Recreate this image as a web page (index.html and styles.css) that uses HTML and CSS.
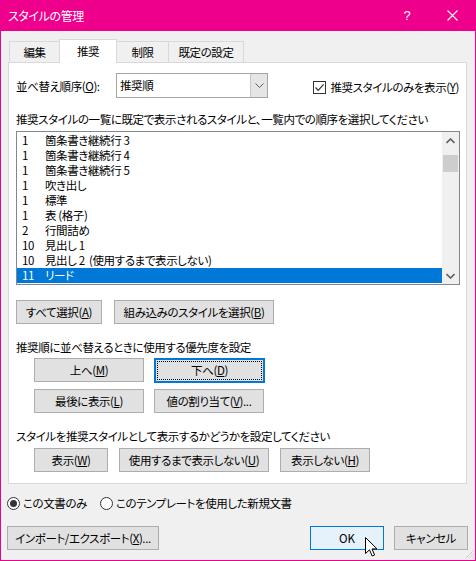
FILE: index.html
```html
<!DOCTYPE html>
<html lang="ja">
<head>
<meta charset="utf-8">
<title>スタイルの管理</title>
<link rel="stylesheet" href="styles.css">
</head>
<body>
<div class="window">
  <div class="titlebar">
    <span class="title">スタイルの管理</span>
    <span class="tb-help">?</span>
    <span class="tb-close"><svg width="11" height="11" viewBox="0 0 11 11"><path d="M0.5 0.5L10.5 10.5M10.5 0.5L0.5 10.5" stroke="#fff" stroke-width="1.1" fill="none"/></svg></span>
  </div>
  <div class="tabs">
    <div class="tab t1">編集</div>
    <div class="tab t2 sel">推奨</div>
    <div class="tab t3">制限</div>
    <div class="tab t4">既定の設定</div>
  </div>
  <div class="panel">
    <div class="sortrow">
      <span class="lbl sortlbl">並べ替え順序(<u>O</u>):</span>
      <div class="combo">
        <span class="combo-text">推奨順</span>
        <span class="combo-btn"><svg width="9" height="5" viewBox="0 0 9 5"><path d="M0.5 0.5L4.5 4.5L8.5 0.5" stroke="#606060" fill="none"/></svg></span>
      </div>
      <div class="check">
        <span class="box"><svg width="11" height="11" viewBox="0 0 11 11"><path d="M1.5 5.5L4.2 8.3L9.6 2.4" stroke="#333" stroke-width="1.2" fill="none"/></svg></span>
        <span class="lbl">推奨スタイルのみを表示(<u>Y</u>)</span>
      </div>
    </div>
    <div class="lbl desc">推奨スタイルの一覧に既定で表示されるスタイルと、一覧内での順序を選択してください</div>
    <div class="listbox">
      <div class="items">
        <div class="item"><span class="num">1</span><span>箇条書き継続行 3</span></div>
        <div class="item"><span class="num">1</span><span>箇条書き継続行 4</span></div>
        <div class="item"><span class="num">1</span><span>箇条書き継続行 5</span></div>
        <div class="item"><span class="num">1</span><span>吹き出し</span></div>
        <div class="item"><span class="num">1</span><span>標準</span></div>
        <div class="item"><span class="num">1</span><span>表 (格子)</span></div>
        <div class="item"><span class="num">2</span><span>行間詰め</span></div>
        <div class="item"><span class="num">10</span><span>見出し 1</span></div>
        <div class="item"><span class="num">10</span><span>見出し 2&nbsp;&nbsp;(使用するまで表示しない)</span></div>
        <div class="item selected"><span class="num">11</span><span>リード</span></div>
      </div>
      <div class="scrollbar">
        <span class="sb-arrow"><svg width="9" height="6" viewBox="0 0 9 6"><path d="M0.5 5L4.5 1L8.5 5" stroke="#606060" stroke-width="1.6" fill="none"/></svg></span>
        <span class="sb-thumb"></span>
        <span class="sb-fill"></span>
        <span class="sb-arrow"><svg width="9" height="6" viewBox="0 0 9 6"><path d="M0.5 1L4.5 5L8.5 1" stroke="#606060" stroke-width="1.6" fill="none"/></svg></span>
      </div>
    </div>
    <div class="btnrow r1">
      <span class="btn w86">すべて選択(<u>A</u>)</span>
      <span class="btn w160">組み込みのスタイルを選択(<u>B</u>)</span>
    </div>
    <div class="lbl sect s1">推奨順に並べ替えるときに使用する優先度を設定</div>
    <div class="btnrow r2 indent">
      <span class="btn w110">上へ(<u>M</u>)</span>
      <span class="btn w110 focus"><span class="focus-in">下へ(<u>D</u>)</span></span>
    </div>
    <div class="btnrow r3 indent">
      <span class="btn w110">最後に表示(<u>L</u>)</span>
      <span class="btn w110">値の割り当て(<u>V</u>)...</span>
    </div>
    <div class="lbl sect s2">スタイルを推奨スタイルとして表示するかどうかを設定してください</div>
    <div class="btnrow r4 indent g11">
      <span class="btn w74">表示(<u>W</u>)</span>
      <span class="btn w150">使用するまで表示しない(<u>U</u>)</span>
      <span class="btn w90">表示しない(<u>H</u>)</span>
    </div>
  </div>
  <div class="radios">
    <span class="radio on"><span class="dot"></span></span><span class="lbl">この文書のみ</span>
    <span class="radio r2nd"></span><span class="lbl">このテンプレートを使用した新規文書</span>
  </div>
  <div class="footer">
    <span class="btn w152">インポート/エクスポート(<u>X</u>)...</span>
    <span class="btn w74 ok">OK</span>
    <span class="btn w74 cancel">キャンセル</span>
  </div>
  <svg class="grip" width="11" height="11" viewBox="0 0 11 11"><path d="M9.5 1.5L1.5 9.5M9.5 5L5 9.5M9.5 8.5L8.5 9.5" stroke="#a8a8a8" stroke-width="1" stroke-dasharray="1 1" fill="none"/></svg>
  <svg class="cursor" width="13" height="20" viewBox="0 0 13 20"><path d="M0.5 0.5L0.5 16.5L4.5 12.8L7.2 19L9.6 18L7 11.9L12 11.9Z" fill="#fff" stroke="#000" stroke-width="1" stroke-linejoin="round"/></svg>
</div>
</body>
</html>
```

FILE: styles.css
```css
* { box-sizing: border-box; }
html, body { margin: 0; padding: 0; }
body {
  font-family: "Noto Sans CJK JP", "Noto Sans", sans-serif;
  font-size: 11.5px;
  letter-spacing: -0.4px;
  font-feature-settings: "palt";
  color: #000;
  background: #fff;
}
u { text-decoration: underline; text-underline-offset: 1px; }

.window {
  position: relative;
  width: 476px;
  height: 561px;
  background: #f0f0f0;
  border: 1px solid #ef008c;
  border-top: 0;
}
.titlebar {
  height: 31px;
  margin: 0 -1px;
  background: #ef008c;
  color: #fff;
  display: flex;
  align-items: center;
  padding-left: 8px;
}
.title { font-size: 12px; line-height: 15px; flex: 1; }
.tb-help { width: 12px; text-align: center; font-family: "Liberation Sans", sans-serif; font-size: 13px; margin-right: 34px; }
.tb-close { width: 11px; height: 11px; display: flex; margin-right: 18px; }

.tabs {
  display: flex;
  align-items: flex-end;
  height: 23px;
  margin-top: 8px;
  padding-left: 8px;
}
.tab {
  height: 21px;
  border: 1px solid #d9d9d9;
  border-bottom: 0;
  background: #f0f0f0;
  display: flex;
  align-items: center;
  justify-content: center;
  line-height: 15px;
  padding-top: 1px;
}
.tab + .tab { margin-left: -1px; }
.t1 { width: 51px; }
.t2 { width: 58px; }
.t3 { width: 53px; }
.t4 { width: 76px; }
.tab.sel {
  position: relative;
  z-index: 1;
  height: 24px;
  margin-bottom: -1px;
  background: #fff;
  padding-top: 0;
}

.panel {
  margin-left: 7px;
  width: 459px;
  height: 422px;
  background: #fff;
  border: 1px solid #d9d9d9;
  padding: 10px 7px 0 7px;
}
.lbl { line-height: 15px; white-space: nowrap; }

.sortrow {
  display: flex;
  align-items: center;
  height: 25px;
}
.sortlbl { width: 100px; padding-top: 2px; }
.combo {
  width: 152px;
  height: 25px;
  border: 1px solid #a5a5a5;
  display: flex;
  align-items: center;
}
.combo-text { flex: 1; padding-left: 3px; line-height: 15px; }
.combo-btn {
  width: 17px;
  height: 23px;
  background: #e5e5e5;
  border-left: 1px solid #c8c8c8;
  display: flex;
  align-items: center;
  justify-content: center;
}
.check {
  margin-left: auto;
  display: flex;
  align-items: center;
  padding-top: 4px;
}
.box {
  width: 13px;
  height: 13px;
  border: 1px solid #333;
  margin-right: 4px;
  display: flex;
  align-items: center;
  justify-content: center;
}

.desc { margin-top: 14px; }

.listbox {
  margin-top: 4px;
  width: 444px;
  height: 154px;
  border: 1px solid #828790;
  display: flex;
}
.items { flex: 1; padding-top: 1px; }
.item {
  height: 15px;
  line-height: 15px;
  display: flex;
  padding-left: 5px;
  white-space: nowrap;
  overflow: hidden;
}
.num { width: 23px; }
.item.selected { background: #0078d7; color: #fff; }
.scrollbar {
  width: 17px;
  background: #f0f0f0;
  display: flex;
  flex-direction: column;
  align-items: center;
}
.sb-arrow {
  height: 17px;
  width: 17px;
  display: flex;
  align-items: center;
  justify-content: center;
}
.sb-thumb {
  width: 15px;
  height: 17px;
  margin-top: 6px;
  background: #cdcdcd;
}
.sb-fill { flex: 1; }

.btnrow { display: flex; gap: 12px; }
.r1 { margin-top: 15px; }
.r2 { margin-top: 3px; gap: 10px; }
.r3 { margin-top: 6px; gap: 10px; }
.r4 { margin-top: 4px; }
.g11 { gap: 11px; }
.indent { padding-left: 18px; }
.s1 { margin-top: 16px; }
.s2 { margin-top: 16px; }

.btn {
  height: 24px;
  background: #e1e1e1;
  border: 1px solid #adadad;
  display: flex;
  align-items: center;
  justify-content: center;
  line-height: 15px;
  white-space: nowrap;
}
.w74 { width: 74px; }
.w86 { width: 86px; }
.w90 { width: 90px; }
.w110 { width: 110px; }
.w150 { width: 150px; }
.w152 { width: 152px; }
.w160 { width: 160px; }
.btn.focus {
  border: 2px solid #0078d7;
  padding: 1px;
  height: 25px;
  width: 111px;
}
.focus-in {
  flex: 1;
  align-self: stretch;
  border: 1px dotted #000;
  display: flex;
  align-items: center;
  justify-content: center;
}

.radios {
  display: flex;
  align-items: center;
  margin-top: 12px;
  padding-left: 6px;
  height: 15px;
}
.radio {
  width: 13px;
  height: 13px;
  border: 1px solid #333;
  border-radius: 50%;
  background: #fff;
  margin-right: 3px;
  display: flex;
  align-items: center;
  justify-content: center;
}
.dot { width: 7px; height: 7px; border-radius: 50%; background: #333; }
.r2nd { margin-left: 13px; }

.footer {
  display: flex;
  margin-top: 15px;
  padding-left: 6px;
  padding-right: 7px;
}
.ok {
  margin-left: auto;
  background: #e5f1fb;
  border-color: #0078d7;
  letter-spacing: 0;
}
.cancel { margin-left: 10px; }

.grip { position: absolute; right: 0; bottom: 0; }
.cursor { position: absolute; left: 364px; top: 537px; }
```
